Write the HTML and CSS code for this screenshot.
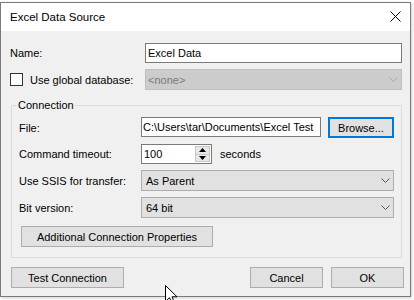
FILE: index.html
```html
<!DOCTYPE html>
<html>
<head>
<meta charset="utf-8">
<link rel="stylesheet" href="styles.css">
</head>
<body>
<div class="peek"></div>
<div class="dialog">
  <div class="titlebar">
    <span class="title">Excel Data Source</span>
    <svg class="close" width="11" height="11" viewBox="0 0 11 11"><path d="M0.5 0.5 L10.5 10.5 M10.5 0.5 L0.5 10.5" stroke="#000" stroke-width="1" fill="none"/></svg>
  </div>
  <div class="content">
    <div class="toprows">
      <div class="lbl">Name:</div>
      <div class="textbox name">Excel Data</div>
      <div class="lbl check"><span class="checkbox"></span>Use global database:</div>
      <div class="combo disabled"><span class="ctext">&lt;none&gt;</span><svg class="chev" width="9" height="5" viewBox="0 0 9 5"><path d="M0.5 0.5 L4.5 4.5 L8.5 0.5" stroke="#a8a8a8" fill="none"/></svg></div>
    </div>
    <fieldset class="group">
      <legend>Connection</legend>
      <div class="grows">
        <div class="lbl">File:</div>
        <div class="filerow">
          <div class="textbox file">C:\Users\tar\Documents\Excel Test</div>
          <div class="btn browse">Browse...</div>
        </div>
        <div class="lbl">Command timeout:</div>
        <div class="spinrow">
          <div class="spinner">
            <span class="stext">100</span>
            <div class="spinbtns">
              <div class="sb"><svg width="7" height="4" viewBox="0 0 7 4"><path d="M3.5 0 L7 4 L0 4 Z" fill="#000"/></svg></div>
              <div class="sb"><svg width="7" height="4" viewBox="0 0 7 4"><path d="M0 0 L7 0 L3.5 4 Z" fill="#000"/></svg></div>
            </div>
          </div>
          <span class="unit">seconds</span>
        </div>
        <div class="lbl">Use SSIS for transfer:</div>
        <div class="combo"><span class="ctext">As Parent</span><svg class="chev" width="9" height="5" viewBox="0 0 9 5"><path d="M0.5 0.5 L4.5 4.5 L8.5 0.5" stroke="#555" fill="none"/></svg></div>
        <div class="lbl">Bit version:</div>
        <div class="combo"><span class="ctext">64 bit</span><svg class="chev" width="9" height="5" viewBox="0 0 9 5"><path d="M0.5 0.5 L4.5 4.5 L8.5 0.5" stroke="#555" fill="none"/></svg></div>
      </div>
      <div class="btn addl">Additional Connection Properties</div>
    </fieldset>
    <div class="footer">
      <div class="btn test">Test Connection</div>
      <div class="spacer"></div>
      <div class="btn cancel">Cancel</div>
      <div class="btn ok">OK</div>
    </div>
  </div>
</div>
<svg class="cursor" width="13" height="20" viewBox="0 0 13 20"><path d="M0.5 0.5 L0.5 16.5 L4.5 12.7 L7 18.5 L9.5 17.5 L7 11.8 L12 11.8 Z" fill="#fff" stroke="#000" stroke-width="1" stroke-linejoin="miter"/></svg>
</body>
</html>
```
FILE: styles.css
```css
html, body {
  margin: 0;
  padding: 0;
}
body {
  background: #ffffff;
  font-family: "Liberation Sans", Arial, sans-serif;
  font-size: 11px;
  color: #000;
  width: 414px;
  height: 300px;
  overflow: hidden;
  position: relative;
}
.peek {
  height: 2px;
}
.dialog {
  width: 411px;
  height: 295px;
  box-sizing: border-box;
  border: 1px solid #7a7a7a;
  background: #f0f0f0;
  box-shadow: 1px 1px 3px rgba(0,0,0,0.2);
  display: flex;
  flex-direction: column;
}
.titlebar {
  height: 28px;
  background: #fff;
  display: flex;
  align-items: center;
  padding-left: 9px;
  padding-right: 9px;
}
.title {
  flex: 1;
  font-size: 11.5px;
  line-height: 14px;
}
.close {
  display: block;
  margin-top: -1px;
}
.content {
  flex: 1;
  padding: 12px 8px 0 9px;
}
.toprows {
  display: grid;
  grid-template-columns: 135px 1fr;
  grid-template-rows: 20px 21px;
  row-gap: 6px;
  align-items: center;
}
.lbl {
  white-space: nowrap;
  line-height: 14px;
}
.check {
  display: flex;
  align-items: center;
}
.checkbox {
  width: 11px;
  height: 11px;
  border: 1px solid #333;
  background: #fff;
  margin-right: 7px;
}
.textbox {
  height: 20px;
  box-sizing: border-box;
  border: 1px solid #7a7a7a;
  background: #fff;
  line-height: 18px;
  padding-left: 2px;
  white-space: nowrap;
  overflow: hidden;
}
.combo {
  height: 21px;
  box-sizing: border-box;
  border: 1px solid #adadad;
  background: #e1e1e1;
  display: flex;
  align-items: center;
  padding: 0 3px 0 4px;
}
.combo.disabled {
  background: #cccccc;
  border-color: #bfbfbf;
  color: #7a7a7a;
  padding-left: 2px;
}
.ctext {
  flex: 1;
  line-height: 14px;
}
.chev {
  display: block;
}
.group {
  margin: 8px 0 0 1px;
  padding: 5px 7px 10px 7px;
  border: 1px solid #dcdcdc;
  min-width: 0;
}
.group legend {
  margin-left: -2px;
  padding: 0 1px;
  line-height: 14px;
}
.grows {
  display: grid;
  grid-template-columns: 122px 1fr;
  grid-template-rows: 21px 20px 21px 21px;
  row-gap: 6px;
  align-items: center;
}
.filerow {
  display: flex;
  align-items: flex-start;
  gap: 7px;
  height: 21px;
}
.textbox.file {
  flex: 1;
  padding-left: 1px;
}
.btn {
  height: 21px;
  box-sizing: border-box;
  border: 1px solid #adadad;
  background: #e1e1e1;
  display: flex;
  align-items: center;
  justify-content: center;
  white-space: nowrap;
  line-height: 14px;
}
.browse {
  width: 66px;
  border: 2px solid #0078d7;
}
.spinrow {
  display: flex;
  align-items: center;
  gap: 8px;
}
.spinner {
  width: 71px;
  height: 20px;
  box-sizing: border-box;
  border: 1px solid #7a7a7a;
  background: #fff;
  display: flex;
  align-items: stretch;
  padding: 1px 1px 1px 2px;
}
.stext {
  flex: 1;
  line-height: 16px;
}
.spinbtns {
  width: 15px;
  display: flex;
  flex-direction: column;
}
.sb {
  flex: 1;
  background: #e8e8e8;
  border: 1px solid #c9c9c9;
  display: flex;
  align-items: center;
  justify-content: center;
}
.sb + .sb {
  border-top: none;
}
.sb svg { display: block; }
.addl {
  width: 192px;
  margin: 8px 0 0 2px;
}
.footer {
  display: flex;
  margin: 9px -2px 0 1px;
  gap: 8px;
}
.test { width: 113px; }
.spacer { flex: 1; }
.cancel, .ok { width: 73px; }
.cursor {
  position: absolute;
  left: 165px;
  top: 285px;
}
```
